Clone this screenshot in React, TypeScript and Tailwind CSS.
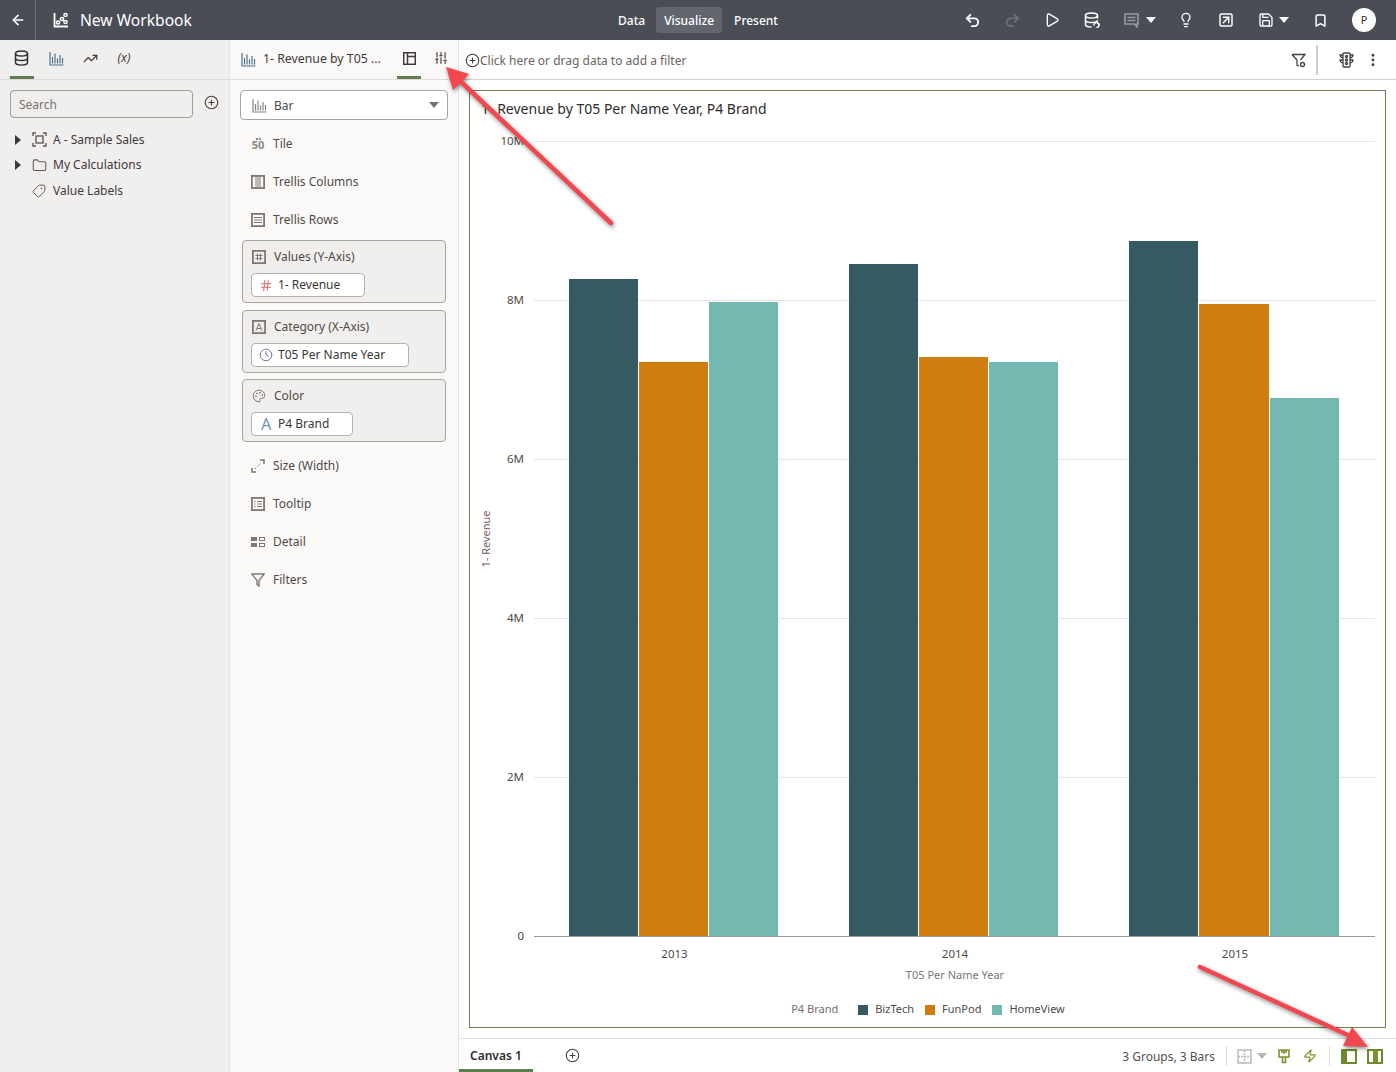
import type { ReactNode } from "react";
import {
  ArrowLeft,
  Bookmark,
  CirclePlus,
  Clock,
  EllipsisVertical,
  Folder,
  Hash,
  Lightbulb,
  Palette,
  Play,
  Redo2,
  Save,
  SlidersVertical,
  SquareArrowUpRight,
  Tag,
  TrendingUp,
  Undo2,
  Zap,
} from "lucide-react";

const FONT = "[font-family:'Noto_Sans','Open_Sans',sans-serif]";

function BarIcon({ className = "" }: { className?: string }) {
  return (
    <svg width="15" height="15" viewBox="0 0 15 15" fill="none" stroke="currentColor" strokeWidth="1.2" className={className}>
      <path d="M1 1v13h13.5M3.5 12.5V6M6 12.5V2.5M8.5 12.5V7.5M11 12.5V4M13.5 12.5V7" />
    </svg>
  );
}

function DbIcon({ className = "", overlay = false }: { className?: string; overlay?: boolean }) {
  return (
    <svg width="16" height="16" viewBox="0 0 16 16" fill="none" stroke="currentColor" strokeWidth="1.5" className={className}>
      <ellipse cx="7.5" cy="3.5" rx="6" ry="2.5" />
      <path d="M1.5 3.5v9c0 1.4 2.7 2.5 6 2.5M13.5 3.5v3M1.5 8c0 1.4 2.7 2.5 6 2.5s6-1.1 6-2.5" />
      {overlay ? <path d="M10 13.5a2.5 2.5 0 1 1 2.5 2M15 13l0.5-1.5" /> : <path d="M13.5 6v6.5c0 1.4-2.7 2.5-6 2.5" />}
    </svg>
  );
}

function Caret({ className = "" }: { className?: string }) {
  return (
    <svg width="10" height="6" viewBox="0 0 10 6" className={`shrink-0 ${className}`}>
      <path d="M0 0h10L5 6z" fill="currentColor" />
    </svg>
  );
}

function BoxIcon({ children }: { children: ReactNode }) {
  return (
    <svg width="14" height="14" viewBox="0 0 14 14" fill="none" stroke="#7d7873" strokeWidth="1">
      <rect x="0.9" y="0.9" width="12.2" height="12.2" strokeWidth="1.8" />
      {children}
    </svg>
  );
}

function TileIcon() {
  return (
    <span className="flex w-[13px] flex-col items-center text-[#8a8580]">
      <i className="h-0 w-[5px] border-t-2 border-dotted border-[#8a8580]" />
      <span className="text-[11px] font-bold leading-[10px]">50</span>
    </span>
  );
}

function SizeIcon() {
  return (
    <svg width="14" height="14" viewBox="0 0 14 14" fill="none" stroke="#7d7873">
      <path d="M1 9v4h4M9 1h4v4" strokeWidth="1.5" />
      <path d="M4 10l6-6" strokeDasharray="1.5 1.5" />
    </svg>
  );
}

function DetailIcon() {
  return (
    <svg width="14" height="12" viewBox="0 0 14 12" fill="#7d7873">
      <rect x="0" y="1" width="6" height="4" />
      <rect x="0" y="7" width="6" height="4" />
      <path d="M8 1h6v4H8zM9 2v2h4V2zM8 7h6v4H8zM9 8v2h4V8z" fillRule="evenodd" />
    </svg>
  );
}

function FunnelIcon() {
  return (
    <svg width="14" height="14" viewBox="0 0 14 14" fill="none" stroke="#7d7873" strokeWidth="1.4">
      <path d="M0.8 1h12.4L8 7.5V13l-2-1.5v-4z" />
    </svg>
  );
}

function Row({ icon, label }: { icon: ReactNode; label: string }) {
  return (
    <div className="flex h-[38px] items-center gap-[8px] pl-[21px] text-[12px] text-[#4f4a47]">
      <span className="flex w-[14px] justify-center">{icon}</span>
      <span>{label}</span>
    </div>
  );
}

function DropBox({ icon, label, pill, pillIcon, width }: { icon: ReactNode; label: string; pill: string; pillIcon: ReactNode; width: string }) {
  return (
    <div className="ml-[12px] flex h-[63px] w-[204px] flex-col rounded-[4px] border border-[#a8a4a0] bg-[#f1efed] pl-[8px]">
      <div className="flex h-[32px] shrink-0 items-center gap-[8px] pl-[1px] text-[12px] text-[#4f4a47]">
        <span className="flex w-[14px] justify-center">{icon}</span>
        <span>{label}</span>
      </div>
      <div className={`flex h-[24px] items-center gap-[5px] rounded-[4px] border border-[#b5b1ad] bg-white pl-[7px] text-[12px] text-[#3a3634] ${width}`}>
        <span className="flex w-[14px] justify-center">{pillIcon}</span>
        <span>{pill}</span>
      </div>
    </div>
  );
}

function TreeRow({ caret, icon, label }: { caret?: boolean; icon: ReactNode; label: string }) {
  return (
    <div className="flex h-[25.5px] items-center text-[12px] text-[#3f3a3a]">
      <span className="flex w-[32px] pl-[15px]">
        {caret && (
          <svg width="6" height="10" viewBox="0 0 6 10">
            <path d="M0 0l6 5-6 5z" fill="#3a3a3a" />
          </svg>
        )}
      </span>
      <span className="flex w-[21px] items-center">{icon}</span>
      <span>{label}</span>
    </div>
  );
}

const bars = [
  { x: 569, w: 69, top: 279, fill: "#355a62" },
  { x: 639, w: 69, top: 362, fill: "#d07d10" },
  { x: 709, w: 69, top: 302, fill: "#74b8b2" },
  { x: 849, w: 69, top: 264, fill: "#355a62" },
  { x: 919, w: 69, top: 357, fill: "#d07d10" },
  { x: 989, w: 69, top: 362, fill: "#74b8b2" },
  { x: 1129, w: 69, top: 241, fill: "#355a62" },
  { x: 1199, w: 70, top: 304, fill: "#d07d10" },
  { x: 1270, w: 69, top: 398, fill: "#74b8b2" },
];

const ticks = [
  { y: 141, label: "10M" },
  { y: 300, label: "8M" },
  { y: 459, label: "6M" },
  { y: 618, label: "4M" },
  { y: 777, label: "2M" },
];

function Chart() {
  return (
    <svg width="915" height="859" viewBox="470 131 915 859" className="block shrink-0 text-[11.5px]" fontFamily="'Noto Sans', sans-serif">
      {ticks.map((t) => (
        <g key={t.y}>
          <line x1="534" x2="1375" y1={t.y + 0.5} y2={t.y + 0.5} stroke="#e6e4e2" />
          <text x="524" y={t.y + 4} textAnchor="end" fill="#4f4a47">{t.label}</text>
        </g>
      ))}
      {bars.map((b) => (
        <rect key={b.x} x={b.x} y={b.top} width={b.w} height={936 - b.top} fill={b.fill} />
      ))}
      <line x1="534" x2="1375" y1="936.5" y2="936.5" stroke="#9b9793" />
      <text x="524" y="940" textAnchor="end" fill="#4f4a47">0</text>
      <text x="674.5" y="958" textAnchor="middle" fill="#4f4a47">2013</text>
      <text x="955" y="958" textAnchor="middle" fill="#4f4a47">2014</text>
      <text x="1235" y="958" textAnchor="middle" fill="#4f4a47">2015</text>
      <text x="955" y="979" textAnchor="middle" fill="#7a7672" fontSize="11">T05 Per Name Year</text>
      <text transform="translate(490 539) rotate(-90)" textAnchor="middle" fill="#7a5a62" fontSize="11">1- Revenue</text>
    </svg>
  );
}

function Arrows() {
  return (
    <svg width="1396" height="1072" viewBox="0 0 1396 1072" className="pointer-events-none absolute left-0 top-0 drop-shadow-[1px_2px_2px_rgba(0,0,0,0.45)]">
      <path d="M611 223L458 79" stroke="#f2474e" strokeWidth="4.5" strokeLinecap="round" />
      <path d="M446 67l23 7-16 16z" fill="#f2474e" />
      <path d="M1200 967L1350 1036" stroke="#f2474e" strokeWidth="4.5" strokeLinecap="round" />
      <path d="M1368 1047l-25-1 9-19z" fill="#f2474e" />
    </svg>
  );
}

function TopIcon({ children }: { children: ReactNode }) {
  return <span className="flex w-[40px] justify-center">{children}</span>;
}

export default function App() {
  return (
    <div className={`relative flex h-[1072px] w-[1396px] flex-col overflow-hidden bg-white ${FONT}`}>
      <header className="grid h-10 shrink-0 grid-cols-[1fr_auto_1fr] items-center bg-[#4a4d55] text-white">
        <div className="flex h-full items-center">
          <div className="flex h-full w-[36px] items-center justify-center border-r border-[#6d7078]">
            <ArrowLeft size={16} strokeWidth={2.4} />
          </div>
          <svg width="16" height="16" viewBox="0 0 16 16" fill="none" stroke="white" strokeWidth="1.5" className="ml-[17px]">
            <path d="M1.5 1v13.5H15" strokeWidth="1.8" />
            <circle cx="5" cy="10.5" r="1.6" />
            <circle cx="9" cy="7" r="1.6" />
            <circle cx="12.5" cy="3" r="1.6" />
            <circle cx="12.5" cy="10" r="1.6" />
          </svg>
          <span className="ml-[11px] pt-[2px] text-[15.6px]">New Workbook</span>
        </div>
        <nav className="flex items-center text-[12px] font-medium">
          <span className="px-[11px] pt-[1px]">Data</span>
          <span className="rounded-[3px] bg-[#62656d] px-[8px] pb-[3px] pt-[5px]">Visualize</span>
          <span className="pl-[12px] pr-[11px] pt-[1px]">Present</span>
        </nav>
        <div className="flex items-center justify-end pr-[20px]">
          <TopIcon><Undo2 size={17} strokeWidth={2.6} /></TopIcon>
          <TopIcon><Redo2 size={17} strokeWidth={2.6} className="text-[#6d7078]" /></TopIcon>
          <TopIcon><Play size={16} strokeWidth={2} /></TopIcon>
          <TopIcon><DbIcon overlay /></TopIcon>
          <span className="flex w-[45px] items-center justify-end gap-[7px] pr-[1px]">
            <svg width="15" height="15" viewBox="0 0 15 15" fill="none" stroke="#9a9ca2" strokeWidth="1.6" className="shrink-0">
              <path d="M1 1h13v10h-1v3l-2.5-3H1zM3.5 4.5h8M3.5 7.5h8" />
            </svg>
            <Caret className="text-white" />
          </span>
          <span className="w-[9px]" />
          <TopIcon><Lightbulb size={16} strokeWidth={2} /></TopIcon>
          <TopIcon><SquareArrowUpRight size={16} strokeWidth={2.2} /></TopIcon>
          <span className="flex w-[45px] items-center justify-end gap-[5px] pr-[2px]">
            <Save size={16} strokeWidth={2} className="shrink-0" />
            <Caret className="text-white" />
          </span>
          <span className="flex w-[42px] justify-end pr-[5px]"><Bookmark size={15} strokeWidth={2.4} /></span>
          <span className="ml-[19px] flex h-6 w-6 items-center justify-center rounded-full bg-white text-[11px] text-[#333]">P</span>
        </div>
      </header>

      <div className="flex min-h-0 flex-1">
        <aside className="w-[230px] shrink-0 border-r border-[#e4e2e0] bg-[#f1efed]">
          <div className="flex h-10 items-center border-b border-[#dedcda] pl-[10px] text-[#45403d]">
            <span className="flex h-full w-[24px] items-center justify-center border-b-[3px] border-[#5f7d4f]"><DbIcon className="text-[#333]" /></span>
            <span className="ml-[10px] flex w-[24px] justify-center pb-[3px]"><BarIcon className="text-[#4f6f8a]" /></span>
            <span className="ml-[10px] flex w-[24px] justify-center pb-[3px]"><TrendingUp size={15} strokeWidth={2} /></span>
            <span className="ml-[10px] flex w-[24px] justify-center pb-[3px] text-[12px] italic">(x)</span>
          </div>
          <div className="flex items-center pl-[10px] pt-[10px]">
            <div className="flex h-[28px] w-[183px] items-center rounded-[4px] border border-[#a09c98] pl-[8px] pt-[1px] text-[12px] text-[#77726e]">Search</div>
            <CirclePlus size={15} strokeWidth={1.8} className="-mt-[3px] ml-[11px] text-[#45403d]" />
          </div>
          <div className="pt-[9px]">
            <TreeRow caret label="A - Sample Sales" icon={
              <svg width="15" height="15" viewBox="0 0 15 15" fill="none" stroke="#5f5a56" strokeWidth="1.4">
                <path d="M1 4V1h3M11 1h3v3M14 11v3h-3M4 14H1v-3" />
                <rect x="4" y="4" width="7" height="7" />
              </svg>
            } />
            <TreeRow caret label="My Calculations" icon={<Folder size={15} strokeWidth={1.7} className="text-[#5f5a56]" />} />
            <TreeRow label="Value Labels" icon={<Tag size={14} strokeWidth={1.7} className="-scale-x-100 text-[#5f5a56]" />} />
          </div>
        </aside>

        <section className="w-[229px] shrink-0 border-r border-[#e4e2e0] bg-[#fbf9f8]">
          <div className="flex h-10 items-center border-b border-[#dedcda] pl-[11px] text-[12.3px] text-[#3f3a3a]">
            <BarIcon className="shrink-0 text-[#4f6f8a]" />
            <span className="ml-[7px] w-[134px] truncate pb-[1px] pr-[14px] whitespace-nowrap">1- Revenue by T05 ...</span>
            <span className="flex h-full w-[24px] items-center justify-center border-b-[3px] border-[#5f7d4f]">
              <svg width="13" height="13" viewBox="0 0 13 13" fill="none" stroke="#3f3a3a" strokeWidth="1.5">
                <rect x="0.7" y="0.7" width="11.6" height="11.6" />
                <path d="M4.5 1v11M5 4.5h7" />
              </svg>
            </span>
            <span className="ml-[8px] flex w-[24px] justify-center pb-[3px]"><SlidersVertical size={14} strokeWidth={2.2} className="text-[#5b4a3c]" /></span>
          </div>
          <div className="pl-[10px] pt-[10px]">
            <div className="flex h-[30px] w-[208px] items-center rounded-[4px] border border-[#a8a4a0] bg-white pl-[11px] pr-[8px] text-[12px] text-[#4f4a47]">
              <BarIcon className="text-[#8a8580]" />
              <span className="ml-[7px] flex-1 pt-[1px]">Bar</span>
              <Caret className="text-[#77726e]" />
            </div>
          </div>
          <div className="pt-[5px]">
            <Row icon={<TileIcon />} label="Tile" />
            <Row icon={<BoxIcon><path d="M5 1v12M7 1v12M9 1v12" /></BoxIcon>} label="Trellis Columns" />
            <Row icon={<BoxIcon><path d="M3 4.5h8M3 7h8M3 9.5h8" /></BoxIcon>} label="Trellis Rows" />
          </div>
          <div className="flex flex-col gap-[6.5px] pt-[1px]">
            <DropBox
              label="Values (Y-Axis)"
              pill="1- Revenue"
              width="w-[114px]"
              icon={<BoxIcon><path d="M5.5 3.5v7M8.5 3.5v7M3.5 5.5h7M3.5 8.5h7" /></BoxIcon>}
              pillIcon={<Hash size={15} strokeWidth={1.6} className="text-[#d0685e]" />}
            />
            <DropBox
              label="Category (X-Axis)"
              pill="T05 Per Name Year"
              width="w-[158px]"
              icon={<BoxIcon><path d="M4 10.5L7 3.5l3 7M5 8.5h4" /></BoxIcon>}
              pillIcon={<Clock size={14} strokeWidth={1.7} className="text-[#8470b0]" />}
            />
            <DropBox
              label="Color"
              pill="P4 Brand"
              width="w-[102px]"
              icon={<Palette size={14} strokeWidth={1.7} className="text-[#7d7873]" />}
              pillIcon={<span className="text-[16px] leading-none text-[#6f93b8]">A</span>}
            />
          </div>
          <div className="pt-[5px]">
            <Row icon={<SizeIcon />} label="Size (Width)" />
            <Row icon={<BoxIcon><path d="M3 4.5h1.5M3 7h1.5M3 9.5h1.5M6 4.5h5M6 7h5M6 9.5h5" /></BoxIcon>} label="Tooltip" />
            <Row icon={<DetailIcon />} label="Detail" />
            <Row icon={<FunnelIcon />} label="Filters" />
          </div>
        </section>

        <main className="flex min-w-0 flex-1 flex-col">
          <div className="flex h-10 shrink-0 items-center border-b border-[#d6d4d2] pl-[6px] pt-[1px] text-[12px] text-[#6a6560]">
            <CirclePlus size={15} strokeWidth={1.7} className="text-[#3f3a3a]" />
            <span className="pt-[1px]">Click here or drag data to add a filter</span>
            <span className="ml-auto flex h-full items-center">
              <svg width="15" height="15" viewBox="0 0 15 15" fill="none" stroke="#45403d" strokeWidth="1.3" className="mr-[1px]">
                <path d="M1 1.5h13L9.5 7M6 7v5l2 1M1 1.5L6 7" />
                <circle cx="11.5" cy="11.5" r="2" />
              </svg>
              <span className="ml-[9px] h-[30px] w-[2px] bg-[#cfcdcb]" />
              <span className="ml-[21px]">
                <svg width="15" height="16" viewBox="0 0 15 16" fill="none" stroke="#45403d" strokeWidth="1.3">
                  <rect x="4" y="1" width="7" height="14" rx="1" />
                  <circle cx="7.5" cy="4.5" r="1" />
                  <circle cx="7.5" cy="8" r="1" />
                  <circle cx="7.5" cy="11.5" r="1" />
                  <path d="M4 3H1c0 1.5 1.5 3 3 3M4 8H1c0 1.5 1.5 3 3 3M11 3h3c0 1.5-1.5 3-3 3M11 8h3c0 1.5-1.5 3-3 3" />
                </svg>
              </span>
              <EllipsisVertical size={16} strokeWidth={2.4} className="ml-[11px] mr-[15px] text-[#45403d]" />
            </span>
          </div>

          <div className="px-[10px] pt-[10px]">
            <div className="flex h-[938px] flex-col border border-[#6b7f4f] bg-white">
              <div className="h-[40px] shrink-0 pl-[10px] pt-[8px] text-[14px] leading-[20px] text-[#2f2b2a]">
                <span className="pl-[1px]">1- Revenue by T05 Per Name Year, P4 Brand</span>
              </div>
              <Chart />
              <div className="flex flex-1 items-center justify-center gap-[11px] pl-[1px] pt-[2px] text-[11px] text-[#4f4a47]">
                <span className="mr-[9px] text-[#7a6a70]">P4 Brand</span>
                <span className="flex items-center gap-[7px]"><i className="h-[10px] w-[10px] bg-[#355a62]" />BizTech</span>
                <span className="flex items-center gap-[7px]"><i className="h-[10px] w-[10px] bg-[#d07d10]" />FunPod</span>
                <span className="flex items-center gap-[7px]"><i className="h-[10px] w-[10px] bg-[#74b8b2]" />HomeView</span>
              </div>
            </div>
          </div>

          <footer className="mt-[10px] flex h-[34px] shrink-0 items-stretch border-t border-[#e2e0de]">
            <div className="flex w-[74px] items-center border-b-[3px] border-[#5f7d4f] pl-[11px] pt-[3px] text-[12px] font-semibold text-[#2f2b2a]">Canvas 1</div>
            <span className="ml-[32px] flex items-center"><CirclePlus size={15} strokeWidth={1.7} className="text-[#45403d]" /></span>
            <div className="ml-auto flex items-center pr-[13px] pt-[1px] text-[12px] text-[#55504d]">
              <span className="pt-[1px]">3 Groups, 3 Bars</span>
              <span className="ml-[11px] h-[20px] w-px bg-[#dedcda]" />
              <svg width="15" height="15" viewBox="0 0 15 15" fill="none" stroke="#b8b5b2" strokeWidth="1.4" className="ml-[10px]">
                <rect x="1" y="1" width="13" height="13" />
                <path d="M7.5 1v13M1 7.5h13" strokeDasharray="2 1" />
              </svg>
              <Caret className="ml-[5px] text-[#b8b5b2]" />
              <svg width="12" height="15" viewBox="0 0 12 15" fill="none" stroke="#7d8f2f" strokeWidth="1.6" className="ml-[11px]">
                <path d="M1 1h10v7H1zM4 1v3M6 1v4M8 1v3M4.5 8v5.5h3V8" />
              </svg>
              <Zap size={14} strokeWidth={2} className="ml-[13px] text-[#7d8f2f]" />
              <span className="ml-[12px] h-[20px] w-px bg-[#dedcda]" />
              <span className="ml-[11px] flex h-[15px] w-[16px] border-2 border-[#6b8a2e] bg-white">
                <i className="w-[4px] bg-[#6b8a2e]" />
              </span>
              <span className="ml-[10px] flex h-[15px] w-[16px] justify-center border-2 border-[#6b8a2e] bg-white">
                <i className="w-[5px] bg-[#7f8f2a]" />
              </span>
            </div>
          </footer>
        </main>
      </div>
      <Arrows />
    </div>
  );
}
